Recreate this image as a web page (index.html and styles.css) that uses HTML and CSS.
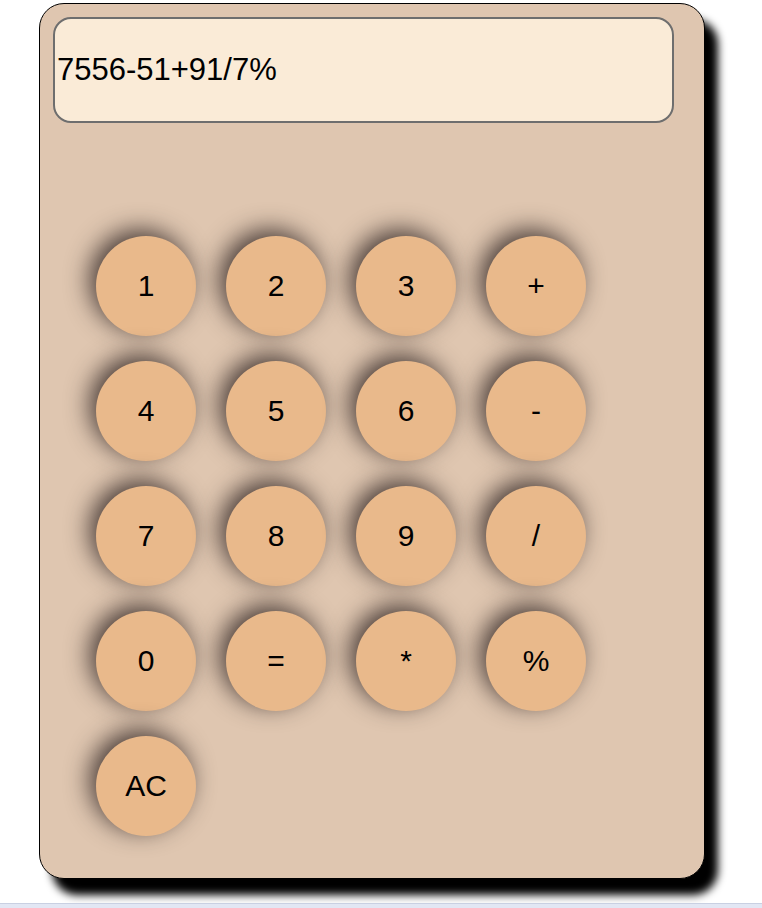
FILE: index.html
```html
<!DOCTYPE html>
<html>
<head>
<meta charset="utf-8">
<link rel="stylesheet" href="styles.css">
</head>
<body>
<div class="calc">
  <div class="display">7556-51+91/7%</div>
  <div class="keys">
    <button class="key">1</button>
    <button class="key">2</button>
    <button class="key">3</button>
    <button class="key">+</button>
    <button class="key">4</button>
    <button class="key">5</button>
    <button class="key">6</button>
    <button class="key">-</button>
    <button class="key">7</button>
    <button class="key">8</button>
    <button class="key">9</button>
    <button class="key">/</button>
    <button class="key">0</button>
    <button class="key">=</button>
    <button class="key">*</button>
    <button class="key">%</button>
    <button class="key">AC</button>
  </div>
</div>
<div class="strip"></div>
</body>
</html>
```
FILE: styles.css
```css
html, body {
  margin: 0;
  padding: 0;
  background: #ffffff;
  overflow: hidden;
}
body {
  font-family: "Liberation Sans", Arial, sans-serif;
  padding-top: 3px;
}
.calc {
  margin-left: 39px;
  width: 664px;
  height: 874px;
  border: 1px solid #000;
  border-radius: 25px;
  background: #dfc6b0;
  box-shadow: 13px 16px 8px #000;
}
.display {
  margin: 13px 0 0 13px;
  width: 615px;
  height: 102px;
  padding-left: 2px;
  border: 2px solid #6e6e6e;
  border-radius: 18px;
  background: #faebd7;
  display: flex;
  align-items: center;
  font-size: 31px;
  color: #000;
}
.keys {
  margin: 113px 0 0 56px;
  display: grid;
  grid-template-columns: repeat(4, 100px);
  grid-auto-rows: 100px;
  column-gap: 30px;
  row-gap: 25px;
}
.key {
  width: 100px;
  height: 100px;
  border: none;
  border-radius: 50%;
  background: #e9b98b;
  font-family: "Liberation Sans", Arial, sans-serif;
  font-size: 30px;
  color: #000;
  padding: 0;
  box-shadow: -6px -6px 24px rgba(35, 25, 25, 0.8);
}
.strip {
  margin-top: 24px;
  height: 6px;
  border-top: 1px solid #c9d0e2;
  background: #e2e7f4;
}
```
